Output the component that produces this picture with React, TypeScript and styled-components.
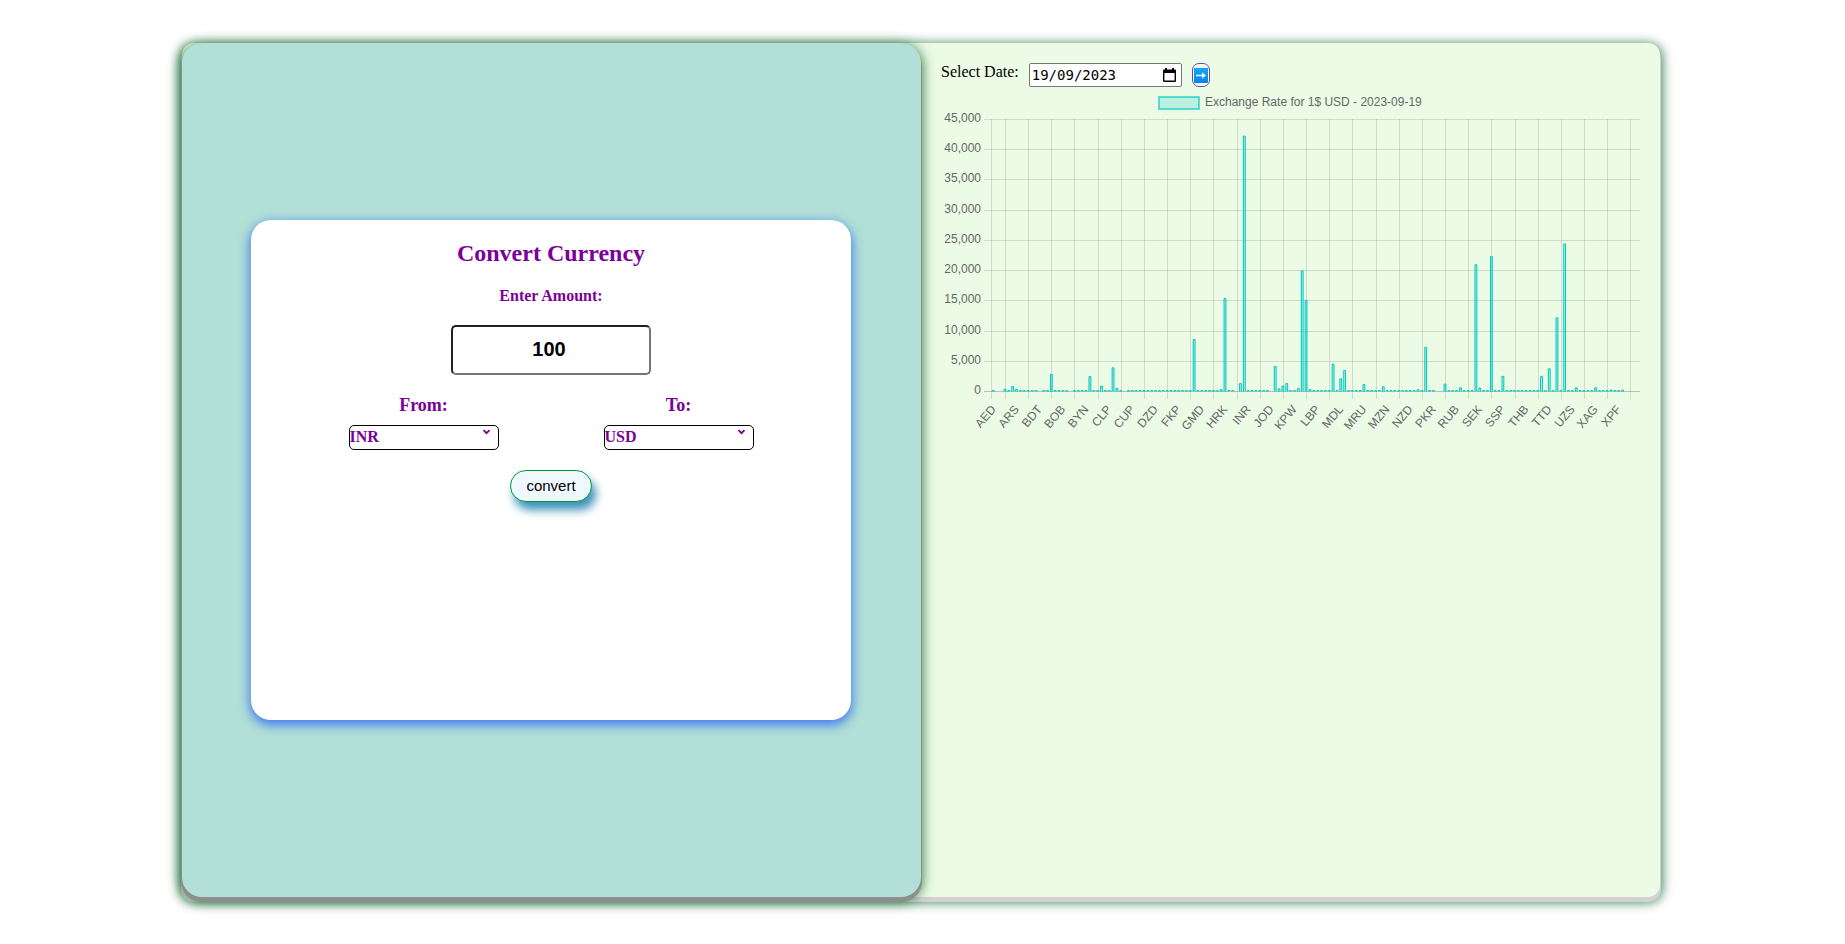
import React, { useState } from "react";
import styled, { createGlobalStyle } from "styled-components";

const GlobalStyle = createGlobalStyle`
  * { box-sizing: border-box; }
  body {
    margin: 0;
    background: #fff;
    color: #000;
    font-family: "Liberation Serif", "Times New Roman", serif;
    font-size: 16px;
  }
`;

const purple = "#7b0099";

const Page = styled.main`
  display: flex;
  min-height: 100vh;
  padding: 43px 185px 47px 182px;
`;

const Board = styled.div`
  flex: 1;
  display: grid;
  grid-template-columns: minmax(0, 1fr) minmax(0, 1fr);
  min-width: 0;
  background: #ebfbe6;
  border-radius: 12px;
  box-shadow: 0 4px 0 1px #d2d2d2, 0 3px 12px 2px #2e7d52;
`;

const ConvertPanel = styled.section`
  display: flex;
  align-items: center;
  justify-content: center;
  padding-right: 1px;
  background: #b2e0d6;
  border-radius: 20px;
  box-shadow: 0 4px 0 1px #8d8d8d, 0 3px 12px 2px rgba(40, 115, 50, 0.85);
`;

const RatesPanel = styled.section`
  padding: 20px 20px 0;
`;

const Card = styled.form`
  display: flex;
  flex-direction: column;
  align-items: center;
  gap: 20px;
  width: 100%;
  max-width: 600px;
  min-height: 500px;
  padding-top: 19px;
  background: #fff;
  border-radius: 20px;
  box-shadow: 0 4px 12px 1px #3c78f0;
  color: ${purple};
`;

const Title = styled.h2`
  margin: 0;
  font-size: 24px;
  line-height: 28px;
`;

const FieldLabel = styled.label<{ $size: number; $line: number }>`
  font-weight: bold;
  font-size: ${(p) => p.$size}px;
  line-height: ${(p) => p.$line}px;
`;

const AmountInput = styled.input`
  width: 200px;
  height: 50px;
  margin: 0;
  padding: 0 4px 2px 0;
  border: 2px inset #767676;
  border-radius: 5px;
  background: #fff;
  color: #000;
  font: bold 20px "Liberation Sans", Arial, sans-serif;
  text-align: center;
`;

const CurrencyRow = styled.div`
  display: flex;
  gap: 105px;
`;

const CurrencyField = styled.div`
  display: flex;
  flex-direction: column;
  align-items: center;
  gap: 10px;
`;

const SelectBox = styled.div`
  position: relative;
  width: 150px;
`;

const Select = styled.select`
  display: block;
  appearance: none;
  width: 100%;
  height: 25px;
  margin: 0;
  padding: 0 0 2px;
  border: 1px solid #000;
  border-radius: 5px;
  background: #fff;
  color: ${purple};
  font: bold 16px "Liberation Serif", serif;
`;

const Chevron = styled.svg`
  position: absolute;
  top: 4px;
  right: 8px;
  width: 9px;
  height: 6px;
  pointer-events: none;
`;

const ConvertButton = styled.button`
  width: 82px;
  height: 32px;
  padding: 0 0 1px;
  border: 1px solid #009a33;
  border-radius: 20px;
  background: aliceblue;
  color: #000;
  font: 15px "Liberation Sans", Arial, sans-serif;
  box-shadow: 4px 8px 10px #3d92b8;
`;

const DateRow = styled.div`
  display: flex;
  gap: 10px;
  height: 23px;
`;

const DateLabel = styled.label`
  line-height: 18px;
`;

const DateBox = styled.div`
  position: relative;
  width: 153px;
`;

const DateInput = styled.input`
  display: block;
  width: 100%;
  height: 24px;
  margin: 0;
  padding: 0 24px 0 2px;
  border: 1px solid #767676;
  border-radius: 2px;
  background: #fff;
  color: #000;
  font: 14px "DejaVu Sans Mono", monospace;
`;

const CalendarIcon = styled.svg`
  position: absolute;
  top: 5px;
  right: 6px;
  width: 13px;
  height: 14px;
  pointer-events: none;
`;

const GoButton = styled.button`
  display: flex;
  align-items: center;
  justify-content: center;
  width: 18px;
  height: 24px;
  padding: 0;
  border: 1px solid #6247b5;
  border-radius: 7px;
  background: #fff;
`;

const ChartSvg = styled.svg`
  display: block;
  width: 100%;
  height: auto;
  font: 12px "Liberation Sans", Arial, sans-serif;
`;

const tickLabels = [
  "AED", "ARS", "BDT", "BOB", "BYN", "CLP", "CUP", "DZD", "FKP", "GMD",
  "HRK", "INR", "JOD", "KPW", "LBP", "MDL", "MRU", "MZN", "NZD", "PKR",
  "RUB", "SEK", "SSP", "THB", "TTD", "UZS", "XAG", "XPF",
];

// Rates large enough to stand out, keyed by position on the category axis.
const rates: Record<number, number> = {
  3: 386, 5: 830, 6: 350, 15: 2835, 25: 2480, 28: 885, 31: 3920, 32: 540,
  52: 8600, 59: 330, 60: 15380, 64: 1310, 65: 42250, 73: 4125, 74: 450,
  75: 900, 76: 1328, 79: 475, 80: 19950, 81: 15050, 82: 322, 88: 4520,
  90: 2100, 91: 3480, 96: 1140, 101: 775, 110: 296, 112: 7290, 117: 1220,
  121: 600, 125: 20970, 126: 570, 129: 22350, 132: 2500, 142: 2510,
  144: 3750, 146: 12200, 148: 24400, 151: 605, 156: 605, 160: 240, 163: 250,
};
const emptySlots = [1, 2, 12, 20, 34, 63, 72, 115, 116];

const lastBar = 163;
const slot = 3.86;
const firstCentre = 52.4;
const baseY = 305;
const plotTop = 33;
const plotLeft = 50;
const plotRight = 699;
const perUnit = (baseY - plotTop) / 45000;
const barWidth = 2.78;

const yTicks = Array.from({ length: 10 }, (_, i) => i * 5000);
const bars = Array.from({ length: lastBar + 1 }, (_, i) => i).filter(
  (i) => !emptySlots.includes(i)
);

function RateChart() {
  return (
    <ChartSvg viewBox="0 0 699 350" role="img" aria-label="Exchange rates">
      <rect x="218" y="11" width="40" height="12" fill="rgba(0,200,200,0.2)" stroke="#00c8c4" strokeOpacity="0.6" strokeWidth="2" />
      <text x="264" y="20" fill="#666">
        Exchange Rate for 1$ USD - 2023-09-19
      </text>

      {yTicks.map((value) => {
        const y = Math.round(baseY - value * perUnit);
        return (
          <g key={value}>
            <line x1="43" x2={plotRight} y1={y + 0.5} y2={y + 0.5} stroke="#000" strokeOpacity={value ? 0.12 : 0.22} />
            <text x="40" y={y + 3} textAnchor="end" fill="#666">
              {value.toLocaleString("en-US")}
            </text>
          </g>
        );
      })}

      <line x1={plotLeft + 0.5} x2={plotLeft + 0.5} y1={plotTop} y2="313" stroke="#000" strokeOpacity="0.12" />
      {tickLabels.map((label, i) => {
        const centre = firstCentre + slot * 6 * i;
        const lineX = Math.round(centre + slot * 3) + 0.5;
        return (
          <g key={label}>
            <line x1={lineX} x2={lineX} y1={plotTop} y2="313" stroke="#000" strokeOpacity="0.12" />
            <text transform={`translate(${centre} 321) rotate(-50)`} y="4" textAnchor="end" fill="#666">
              {label}
            </text>
          </g>
        );
      })}

      {bars.map((i) => {
        const height = Math.max((rates[i] ?? 0) * perUnit, 1);
        const left = firstCentre + slot * i - barWidth / 2;
        const top = baseY + 0.5 - height;
        const right = left + barWidth;
        return (
          <g key={i}>
            <rect x={left} y={top} width={barWidth} height={height} fill="rgba(0,200,200,0.2)" />
            <path
              d={`M${left + 0.5} ${baseY + 0.5}V${top}H${right - 0.5}V${baseY + 0.5}`}
              fill="none"
              stroke="#00c8c4"
            />
          </g>
        );
      })}
    </ChartSvg>
  );
}

interface CurrencySelectProps {
  id: string;
  label: string;
  value: string;
  onChange: (value: string) => void;
}

function CurrencySelect({ id, label, value, onChange }: CurrencySelectProps) {
  return (
    <CurrencyField>
      <FieldLabel htmlFor={id} $size={18} $line={20}>
        {label}
      </FieldLabel>
      <SelectBox>
        <Select id={id} value={value} onChange={(e) => onChange(e.target.value)}>
          {["INR", "USD"].map((code) => (
            <option key={code}>{code}</option>
          ))}
        </Select>
        <Chevron viewBox="0 0 9 6" aria-hidden="true">
          <path d="M1.5 1.2 L4.5 4.2 L7.5 1.2" fill="none" stroke={purple} strokeWidth="1.9" />
        </Chevron>
      </SelectBox>
    </CurrencyField>
  );
}

export default function App() {
  const [amount, setAmount] = useState("100");
  const [from, setFrom] = useState("INR");
  const [to, setTo] = useState("USD");
  const [date, setDate] = useState("19/09/2023");

  return (
    <>
      <GlobalStyle />
      <Page>
        <Board>
          <ConvertPanel>
            <Card onSubmit={(e) => e.preventDefault()}>
              <Title>Convert Currency</Title>
              <FieldLabel htmlFor="amount" $size={16} $line={18}>
                Enter Amount:
              </FieldLabel>
              <AmountInput
                id="amount"
                inputMode="decimal"
                value={amount}
                onChange={(e) => setAmount(e.target.value)}
              />
              <CurrencyRow>
                <CurrencySelect id="from" label="From:" value={from} onChange={setFrom} />
                <CurrencySelect id="to" label="To:" value={to} onChange={setTo} />
              </CurrencyRow>
              <ConvertButton type="submit">convert</ConvertButton>
            </Card>
          </ConvertPanel>
          <RatesPanel>
            <DateRow>
              <DateLabel htmlFor="date">Select Date:</DateLabel>
              <DateBox>
                <DateInput id="date" value={date} onChange={(e) => setDate(e.target.value)} />
                <CalendarIcon viewBox="0 0 13 14" aria-hidden="true">
                  <path
                    fillRule="evenodd"
                    d="M2 0h2v1.4h5V0h2v1.4h.8q1.2 0 1.2 1.2v10.2q0 1.2-1.2 1.2H1.2Q0 14 0 12.8V2.6Q0 1.4 1.2 1.4H2zM1.4 5v7.6h10.2V5z"
                  />
                </CalendarIcon>
              </DateBox>
              <GoButton type="button" aria-label="Show rates">
                <svg width="14" height="15" viewBox="0 0 14 15" aria-hidden="true">
                  <defs>
                    <linearGradient id="go" x1="0" y1="0" x2="0" y2="1">
                      <stop offset="0" stopColor="#12a8fb" />
                      <stop offset="1" stopColor="#0583ee" />
                    </linearGradient>
                  </defs>
                  <rect width="14" height="15" fill="url(#go)" />
                  <path d="M2 6.8H8V4.2L12 7.5L8 10.8V8.2H2z" fill="#f2faff" />
                </svg>
              </GoButton>
            </DateRow>
            <RateChart />
          </RatesPanel>
        </Board>
      </Page>
    </>
  );
}
